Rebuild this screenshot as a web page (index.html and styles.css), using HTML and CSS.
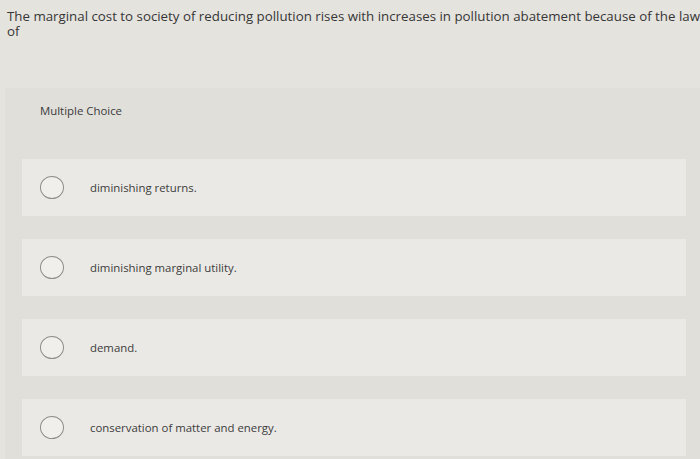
FILE: index.html
```html
<!DOCTYPE html>
<html>
<head>
<meta charset="utf-8">
<link rel="stylesheet" href="styles.css">
</head>
<body>
<div class="question">The marginal cost to society of reducing pollution rises with increases in pollution abatement because of the law of</div>
<div class="panel">
  <div class="label">Multiple Choice</div>
  <div class="options">
    <div class="option"><span class="radio"></span><span class="text">diminishing returns.</span></div>
    <div class="option"><span class="radio"></span><span class="text">diminishing marginal utility.</span></div>
    <div class="option"><span class="radio"></span><span class="text">demand.</span></div>
    <div class="option"><span class="radio"></span><span class="text">conservation of matter and energy.</span></div>
  </div>
</div>
</body>
</html>
```
FILE: styles.css
```css
html, body {
  margin: 0;
  padding: 0;
  height: 100%;
  overflow: hidden;
}
body {
  background: #e5e3de;
  font-family: "Open Sans", Lato, "Liberation Sans", sans-serif;
  color: #3e3e3e;
}
.question {
  padding: 9px 0 0 7px;
  font-size: 13.3px;
  line-height: 15px;
  color: #363636;
}
.panel {
  margin: 49px 0 0 5px;
  background: #e1dfda;
  padding: 16px 14px 3px 17px;
}
.label {
  font-size: 11.4px;
  color: #3a3a3a;
  padding-left: 18px;
  line-height: 14px;
}
.options {
  margin-top: 41px;
  display: flex;
  flex-direction: column;
  gap: 23px;
}
.option {
  background: #eae9e5;
  height: 57px;
  display: flex;
  align-items: center;
  padding-left: 18px;
  gap: 26px;
}
.radio {
  width: 22px;
  height: 21px;
  border: 1.5px solid #8d8d8b;
  border-radius: 50%;
  background: #f0efec;
  flex: none;
}
.text {
  font-size: 11.4px;
  color: #3c3c3c;
}
```
